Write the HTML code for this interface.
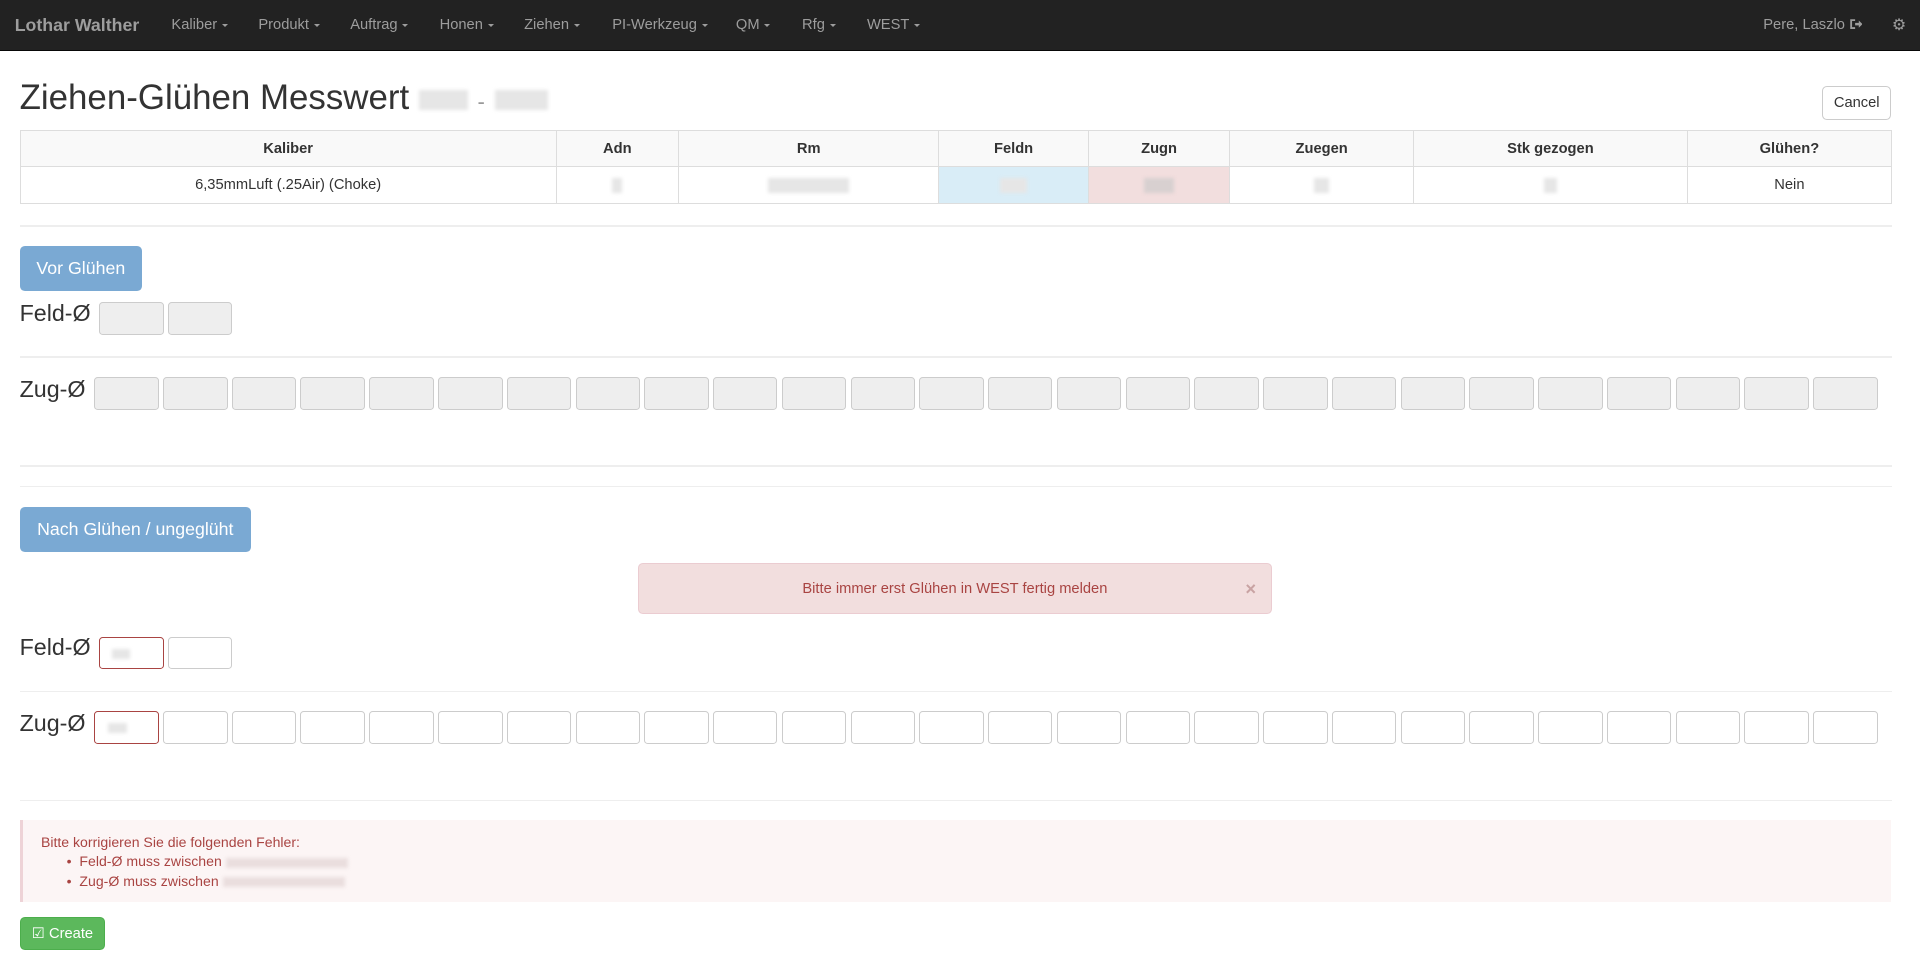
<!DOCTYPE html>
<html><head><meta charset="utf-8">
<style>
html,body{margin:0;padding:0;background:#fff;overflow:hidden}
body{width:1920px;height:969px}
#w{zoom:1.2245;width:1568px;height:792px;position:relative;font-family:"Liberation Sans",Arial,sans-serif;color:#333}
.a{position:absolute}
.nav{left:0;top:0;width:1568px;height:41px;background:#222;border-bottom:1px solid #080808}
.nav span{position:absolute;top:14px;font-size:12px;color:#9d9d9d}
.caret{display:inline-block;width:0;height:0;border-left:3px solid transparent;border-right:3px solid transparent;border-top:3px solid #9d9d9d;vertical-align:middle;margin-left:4px}
.brand{position:absolute;left:12px;top:12px;font-size:14.5px;font-weight:bold;color:#9d9d9d}
h1{position:absolute;left:16px;top:64px;margin:0;font-size:28.5px;font-weight:normal;color:#333}
.blur{display:inline-block;background:#e6e6e6;height:12px;vertical-align:middle;filter:blur(1.5px)}
table{position:absolute;left:16px;top:106px;width:1529px;border-collapse:collapse;font-size:12px}
td,th{border:1px solid #ddd;text-align:center;height:29px;padding:0}
th{background:#f9f9f9;font-weight:bold}
.hr{position:absolute;left:16px;width:1529px;height:1px;background:#eee}
.btn{position:absolute;border-radius:4px;color:#fff;font-size:14.5px;display:flex;align-items:center;justify-content:center}
.lbl{position:absolute;left:16px;font-size:19px;color:#333}
.in{position:absolute;width:51px;height:25px;border:1px solid #ccc;border-radius:3px;box-sizing:content-box}
.g{background:#eee}
.err{border-color:#a94442}
</style></head><body><div id="w">
<div class="a nav">
<div class="brand">Lothar Walther</div>
<span style="left:140px">Kaliber<i class="caret"></i></span>
<span style="left:211px">Produkt<i class="caret"></i></span>
<span style="left:286px">Auftrag<i class="caret"></i></span>
<span style="left:359px">Honen<i class="caret"></i></span>
<span style="left:428px">Ziehen<i class="caret"></i></span>
<span style="left:500px">PI-Werkzeug<i class="caret"></i></span>
<span style="left:601px">QM<i class="caret"></i></span>
<span style="left:655px">Rfg<i class="caret"></i></span>
<span style="left:708px">WEST<i class="caret"></i></span>
<span style="left:1440px">Pere, Laszlo <svg width="11" height="10" viewBox="0 0 11 10" style="vertical-align:-1px"><path d="M1 1h4v1.5H2.5v5H5V9H1z" fill="#9d9d9d"/><path d="M5 4h3V2l3 3-3 3V6H5z" fill="#9d9d9d"/></svg></span>
<span style="left:1545px;top:12px;font-size:13px">&#9881;</span>
</div>
<h1>Ziehen-Glühen Messwert <span class="blur" style="width:40px;height:16px"></span> <span style="font-size:18px;color:#999">-</span> <span class="blur" style="width:44px;height:16px"></span></h1>
<div class="a" style="left:1488px;top:70px;width:55px;height:26px;border:1px solid #ccc;border-radius:4px;font-size:12px;display:flex;align-items:center;justify-content:center">Cancel</div>
<table>
<tr><th style="width:437px">Kaliber</th><th style="width:99px">Adn</th><th style="width:212px">Rm</th><th style="width:121px">Feldn</th><th style="width:115px">Zugn</th><th style="width:149px">Zuegen</th><th style="width:223px">Stk gezogen</th><th>Glühen?</th></tr>
<tr><td>6,35mmLuft (.25Air) (Choke)</td><td><span class="blur" style="width:8px"></span></td><td><span class="blur" style="width:66px"></span></td><td style="background:#d9edf7"><span class="blur" style="width:22px"></span></td><td style="background:#f2dede"><span class="blur" style="width:24px;background:#d8d0d0"></span></td><td><span class="blur" style="width:12px"></span></td><td><span class="blur" style="width:10px"></span></td><td>Nein</td></tr>
</table>
<div class="hr" style="top:184px"></div>
<div class="btn" style="left:16px;top:201px;width:100px;height:37px;background:#7aa9d3">Vor Glühen</div>
<div class="lbl" style="top:245px">Feld-Ø</div>
<div class="in g" style="left:81px;top:247px"></div>
<div class="in g" style="left:137px;top:247px"></div>
<div class="hr" style="top:291px"></div>
<div class="lbl" style="top:307px">Zug-Ø</div>
<div id="z1"></div>
<div class="hr" style="top:380px"></div>
<div class="hr" style="top:397px"></div>
<div class="btn" style="left:16px;top:414px;width:189px;height:37px;background:#7aa9d3">Nach Glühen / ungeglüht</div>
<div class="a" style="left:521px;top:460px;width:516px;height:40px;background:#f2dede;border:1px solid #ebccd1;border-radius:4px;color:#a94442;font-size:12px;display:flex;align-items:center;justify-content:center">Bitte immer erst Glühen in WEST fertig melden<span style="position:absolute;right:12px;top:11px;color:#c9a3a3;font-size:15px;font-weight:bold">×</span></div>
<div class="lbl" style="top:518px">Feld-Ø</div>
<div class="in err" style="left:81px;top:520px"><span class="blur" style="width:14px;height:8px;margin:9px 0 0 10px;display:block"></span></div>
<div class="in" style="left:137px;top:520px"></div>
<div class="hr" style="top:564px"></div>
<div class="lbl" style="top:580px">Zug-Ø</div>
<div id="z2"></div>
<div class="hr" style="top:653px"></div>
<div class="a" style="left:16px;top:670px;width:1526px;height:67px;background:#fcf5f5;border-left:3px solid #eed3d7;color:#a94442;font-size:11.5px">
<div style="position:absolute;left:15px;top:11px">Bitte korrigieren Sie die folgenden Fehler:</div>
<div style="position:absolute;left:36px;top:27px">•&nbsp;&nbsp;Feld-Ø muss zwischen <span class="blur" style="width:100px;height:8px;background:#eadede"></span></div>
<div style="position:absolute;left:36px;top:43px">•&nbsp;&nbsp;Zug-Ø muss zwischen <span class="blur" style="width:100px;height:8px;background:#eadede"></span></div>
</div>
<div class="btn" style="left:16px;top:749px;width:70px;height:27px;background:#5cb85c;font-size:12px;border:1px solid #4cae4c;box-sizing:border-box">&#9745;&nbsp;Create</div>
</div>
<script>
function row(id,top,grey){var h='';for(var i=0;i<26;i++){var x=77+i*56.15;var c='in'+(grey?' g':'')+(!grey&&i==0?' err':'');h+='<div class="'+c+'" style="left:'+x.toFixed(1)+'px;top:'+top+'px">'+(!grey&&i==0?'<span class="blur" style="width:16px;height:8px;margin:9px 0 0 10px;display:block"></span>':'')+'</div>';}document.getElementById(id).innerHTML=h;}
row('z1',308,true);row('z2',581,false);
</script>
</body></html>
